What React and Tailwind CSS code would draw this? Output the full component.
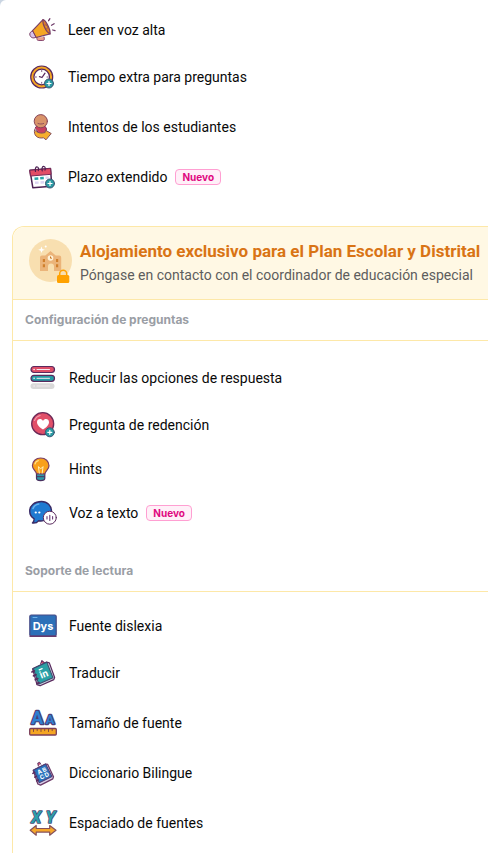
import clsx from 'clsx';

const OUTLINE = '#5a2a5e';

function Icon({ children }) {
  return (
    <svg viewBox="0 0 28 28" className="size-7 shrink-0 overflow-visible" fill="none" strokeLinecap="round" strokeLinejoin="round" aria-hidden="true">
      {children}
    </svg>
  );
}

function PlusBadge({ cx, cy }) {
  return (
    <g>
      <circle cx={cx} cy={cy} r="4.5" fill="#2a9aa3" stroke="#3f5673" strokeWidth="1" />
      <path d={`M${cx - 2} ${cy}h4M${cx} ${cy - 2}v4`} stroke="#fff" strokeWidth="1.2" />
    </g>
  );
}

function MegaphoneIcon() {
  return (
    <Icon>
      <path d="M9 21.500c-.6 2 .2 3 1.800 3h4c1.600 0 2-1.300 1.200-3.500" fill="#e9a08c" stroke="#8a4a72" />
      <path d="M15 3.700 4.300 14.800l3.800 6.700L22 17.800Z" fill="#f5a623" stroke="#7a3f66" strokeWidth="1.200" />
      <path d="M15 3.700c2.300.2 7.800 9.500 7 14.100-3.500-1-7.800-9.500-7-14.100Z" fill="#de7d2b" stroke="#7a3f66" strokeWidth="1.200" />
      <path d="M17 9c2-.6 3.200 2.300 1.800 3.800" fill="#f5a623" stroke="#7a3f66" strokeWidth=".8" />
      <path d="M4.500 15.200c-2.200.4-3.300 2-2.500 4.200.9 2.300 3.300 3.300 5.600 2Z" fill="#d9c2e8" stroke="#7a3f66" />
      <path d="m20.600 4.700 1.300-2M23.500 9.200l2.600-1.400M24.700 14l2.300.7" stroke="#6d3a68" strokeWidth="1.300" />
    </Icon>
  );
}

function ClockIcon() {
  return (
    <Icon>
      <circle cx="13.700" cy="14" r="11" fill="#f5a623" stroke={OUTLINE} strokeWidth="1.200" />
      <circle cx="13.700" cy="14" r="7.800" fill="#fff" stroke={OUTLINE} strokeWidth="1.200" />
      <path d="m11.500 13.700 2.500.8 3-4.300" stroke={OUTLINE} strokeWidth="1.300" />
      <path d="M13.700 7.500v1M7.400 14h1M20 14h-1M13.700 20.300v-1" stroke={OUTLINE} strokeWidth=".8" />
      <PlusBadge cx={21} cy={20.5} />
    </Icon>
  );
}

function AttemptsIcon() {
  return (
    <Icon>
      <path d="M7.300 15c.4-2 2-2.600 5.400-2.600s5.300.8 5.800 3.600l-.8 4.500-5.200 1.500Z" fill="#c93f5e" stroke="#7b3358" />
      <path d="M6.500 17C5.500 22 9 26 15.500 24.800l2.500 2 5.200-6.300-5.700-3.300-.4 2.300C13 20.800 9.500 20 6.500 17Z" fill="#f6ae2d" stroke="#85505b" />
      <circle cx="12.800" cy="8.200" r="6.600" fill="#d9946a" stroke="#87475a" />
      <path d="M10 10.500c1.800.7 3.800.7 5.600 0" stroke="#87475a" strokeWidth=".9" />
    </Icon>
  );
}

function CalendarIcon() {
  return (
    <Icon>
      <path d="M2 7.300 22.500 5.500l1.300 17.700-19 1.500Z" fill="#fff" stroke="#4c2153" strokeWidth="1.500" />
      <path d="M2 7.300 22.500 5.500l.6 5.800L2.800 13Z" fill="#e24d66" stroke="#7b2a56" strokeWidth="1" />
      <path d="M7.500 8.500c-.8-3 .4-4.800 1.800-4.500 1.300.3 1.500 2 1 3.600M14.200 7.800c-.8-3 .4-4.600 1.800-4.300 1.300.3 1.500 2 1 3.600" stroke="#4c2153" strokeWidth="1.200" />
      <path d="m6.500 15.800 3.800-.3M12.200 15.300l3.600-.3" stroke="#28a5a8" strokeWidth="2.400" strokeLinecap="butt" />
      <path d="m17.500 14.800 3.200-.2M7 19.800l3.600-.2M12.500 19.500l3.600-.3" stroke="#ddd5f3" strokeWidth="2.400" strokeLinecap="butt" />
      <PlusBadge cx={22} cy={20.5} />
    </Icon>
  );
}

function OptionsIcon() {
  return (
    <Icon>
      <rect x="2" y="2.500" width="23.500" height="6" rx="3" fill="#de4e68" stroke={OUTLINE} strokeWidth="1.200" />
      <rect x="2" y="11.300" width="23.500" height="6" rx="3" fill="#239ca4" stroke={OUTLINE} strokeWidth="1.200" />
      <rect x="1.500" y="19.200" width="24" height="5.800" rx="2.900" fill="#d9d9d9" />
      <path d="M8 5.500h12.500M8 14.300h12.500M8 22h12.500" stroke="#f4e8ee" strokeWidth="1" />
      <path d="M5 5.500h.2M5 14.300h.2M5 22h.2" stroke="#f4e8ee" strokeWidth="1.600" />
    </Icon>
  );
}

function RedemptionIcon() {
  return (
    <Icon>
      <circle cx="13.700" cy="12.700" r="11" fill="#e14f69" stroke="#6b2957" strokeWidth="1.300" />
      <path d="M5.500 9.500c1.200-2.800 2.800-4.300 5.600-5" stroke="#f29aac" strokeWidth="1.200" />
      <path d="M14 18.500c-3-1.800-6-4.500-6-7.300 0-3.500 4.300-4.200 6-1.300 1.700-2.900 6-2.200 6 1.300 0 2.800-3 5.500-6 7.300Z" fill="#fff" />
      <PlusBadge cx={20.8} cy={21.3} />
    </Icon>
  );
}

function BulbIcon() {
  return (
    <Icon>
      <path d="M7.500 18.500h8.300v4.800c0 1.500-1.400 2.300-4.200 2.300s-4.100-.8-4.100-2.300Z" fill="#2e98a5" stroke="#49305f" strokeWidth="1.200" />
      <path d="M8 21.700h7.300" stroke="#49305f" strokeWidth="1" />
      <path d="M11.700 3c-4.800 0-8.300 3.400-8.300 7.800 0 3.400 3.300 5 4.200 8h8.200c.9-3 4.200-4.600 4.200-8C20 6.400 16.500 3 11.700 3Z" fill="#f9a01b" stroke="#7a3f66" strokeWidth="1.200" />
      <path d="M10.300 18.200 9.500 12M13.200 18.200l.8-6.200M9.500 12l2.200 1.600L14 12" stroke="#fff0b8" strokeWidth="1" />
      <path d="M6 9c.4-1.700 1.600-2.900 3.300-3.300" stroke="#ffe08a" strokeWidth="1.200" />
    </Icon>
  );
}

function VoiceIcon() {
  return (
    <Icon>
      <path d="M12.500 2.500C5.500 2.500.7 6.500.7 12c0 3.500 1.500 6 4.300 7.700.3 1.800-.3 3-1.500 4.300 2.700.3 4.700-.4 6-2.200 7.500 1 13-2.800 13-9.300 0-6-4.200-10-10-10Z" fill="#1f7ad1" stroke="#3a2b66" strokeWidth="1.400" />
      <path d="M4 9.500C5 7 7 5.500 9.700 5" stroke="#6bb3ee" strokeWidth="1.600" />
      <path d="M6.700 13.500h.1M10.300 13.500h.1" stroke="#fff" strokeWidth="2.200" />
      <circle cx="20.800" cy="18.700" r="6.500" fill="#fff" stroke="#5a2a5e" strokeWidth="1" />
      <path d="M18 17.500v2.500M20.800 16.200v5.300M23.600 17.500v2.500" stroke="#6a3b78" strokeWidth="1.100" />
    </Icon>
  );
}

function DyslexiaIcon() {
  return (
    <Icon>
      <rect x="0.800" y="3" width="26.400" height="21" rx="1.500" fill="#2d70b8" stroke="#464a85" strokeWidth="1.200" />
      <path d="M1 24.300h26" stroke="#6b3a6c" strokeWidth="1.400" />
      <path d="M4 5.500h4" stroke="#6fb2ea" strokeWidth="1" />
      <text x="14" y="17.500" textAnchor="middle" fontSize="11" fontWeight="700" fill="#fff" fontFamily="Inter, sans-serif">Dys</text>
    </Icon>
  );
}

function TranslateIcon() {
  return (
    <Icon>
      <g transform="rotate(-5 14 14)">
        <path d="m12.500 4.500 1.500-3 2.200 2.300" fill="#e24d66" stroke={OUTLINE} />
        <path d="M4 9 18.500 3.500l2.700 1 4 15-1 2L10 26.500l-3-1.500Z" fill="#c7d4df" stroke={OUTLINE} strokeWidth="1.200" />
        <path d="M4.700 8.700 18.700 3.500l4.800 16-14.700 5Z" fill="#2aa0a5" stroke="#3d4b70" strokeWidth="1.100" />
        <path d="m3 12 2.600-.9M4.300 16l2.600-.9M5.700 20l2.600-.9M7 24l2.200-.8" stroke={OUTLINE} strokeWidth="1.700" />
        <path d="m10.500 10.500 3-1" stroke="#fff" strokeWidth="1.300" />
        <text x="14.500" y="18.500" textAnchor="middle" transform="rotate(-17 14.500 14)" fontSize="10" fontWeight="700" fill="#fff" fontFamily="Roboto, sans-serif">in</text>
      </g>
    </Icon>
  );
}

function FontSizeIcon() {
  return (
    <Icon>
      <g fill="#2e7fd0" stroke="#4b3f78" strokeWidth="2.400" strokeLinejoin="round" paintOrder="stroke" fontFamily="Roboto, sans-serif" fontWeight="700" textAnchor="middle">
        <text x="8.200" y="15.300" fontSize="18">A</text>
        <text x="21.200" y="15.300" fontSize="13">A</text>
      </g>
      <rect x="0.700" y="19.500" width="26.600" height="6.500" rx="1" fill="#f5a623" stroke="#7b3e5a" strokeWidth="1.300" />
      <path d="M4.500 20v2.500M8.200 20v1.700M12 20v2.500M15.700 20v1.700M19.500 20v2.500M23.200 20v1.700" stroke="#8a4a3c" strokeWidth="1" />
    </Icon>
  );
}

function DictionaryIcon() {
  return (
    <Icon>
      <g transform="rotate(-8 14 15)">
        <path d="m10.500 6.500-.2-3 2-.6.8 2" fill="#d2607b" stroke={OUTLINE} strokeWidth=".9" />
        <path d="m4.800 10 13.200-4.500 2 .7 4 13-1 2-13 4.500-2.500-1.500Z" fill="#d5cfe8" stroke="#6d3a68" strokeWidth="1.300" />
        <path d="M5.300 9.800 18 5.500l4.500 13.200-13.500 4.500Z" fill="#2a74bd" stroke="#4b3f78" strokeWidth="1" />
        <path d="m4 13 2-.7M5.300 17l2-.7M6.700 21l2-.7" stroke={OUTLINE} strokeWidth="1.400" />
        <g transform="rotate(-18 14 14.500)" fill="#fff" fontFamily="Inter, sans-serif" fontSize="6" fontWeight="700" textAnchor="middle">
          <text x="11.800" y="13.800">A</text>
          <text x="17" y="13.800">B</text>
          <text x="11.800" y="19.300">C</text>
          <text x="17" y="19.300">D</text>
        </g>
      </g>
    </Icon>
  );
}

function SpacingIcon() {
  return (
    <Icon>
      <g fill="#2ba0aa" stroke="#4d4b78" strokeWidth="1.600" paintOrder="stroke" fontFamily="Roboto, sans-serif" fontWeight="700" fontStyle="italic" textAnchor="middle">
        <text x="7.300" y="13.500" fontSize="16">X</text>
        <text x="21.500" y="13.500" fontSize="16">Y</text>
      </g>
      <path d="m1.200 21.300 6-4.800v3h13.500v-3l6.300 4.800-6.300 4.900v-3.100H7.200v3.100Z" fill="#f6a72b" stroke="#85505b" strokeWidth="1.200" />
    </Icon>
  );
}

function SchoolBadge() {
  return (
    <svg viewBox="0 0 43 45" className="h-[45px] w-[43px] shrink-0" aria-hidden="true">
      <circle cx="21.500" cy="21.500" r="21.500" fill="#f8dfb0" />
      <path d="M11 18.500q0-2 2-2h3.300L21.500 12l5.200 4.500h3.500q2 0 2 2V32H25v-4.500a3 3 0 0 0-6 0V32h-8Z" fill="#ebb47a" />
      <circle cx="21.500" cy="19" r="2.800" fill="#fff3d9" />
      <path d="M21.500 17.500v1.700h1.400" fill="none" stroke="#c97320" strokeWidth="1" />
      <path d="M13.800 20h2.200v3h-2.200ZM13.800 25.300h2.200v3h-2.200ZM27 20h2.200v3H27ZM27 25.300h2.200v3H27Z" fill="#d07f2c" />
      <path d="m12.500 7.500.9 2.400 2.400.9-2.400.9-.9 2.400-.9-2.400-2.400-.9 2.400-.9Z" fill="#fff" />
      <circle cx="16.700" cy="7.500" r="1" fill="#fff" />
      <path d="M30.700 38v-3.200a3.500 3.500 0 0 1 7 0V38" fill="none" stroke="#ffa200" strokeWidth="1.500" />
      <rect x="28" y="36" width="12.300" height="8" rx="1.500" fill="#ffa200" />
    </svg>
  );
}

const generalItems = [
  { label: 'Leer en voz alta', icon: MegaphoneIcon, compact: true },
  { label: 'Tiempo extra para preguntas', icon: ClockIcon },
  { label: 'Intentos de los estudiantes', icon: AttemptsIcon },
  { label: 'Plazo extendido', icon: CalendarIcon, isNew: true },
];

const planSections = [
  {
    title: 'Configuración de preguntas',
    items: [
      { label: 'Reducir las opciones de respuesta', icon: OptionsIcon },
      { label: 'Pregunta de redención', icon: RedemptionIcon, compact: true },
      { label: 'Hints', icon: BulbIcon, compact: true },
      { label: 'Voz a texto', icon: VoiceIcon, isNew: true, compact: true },
    ],
  },
  {
    title: 'Soporte de lectura',
    items: [
      { label: 'Fuente dislexia', icon: DyslexiaIcon, compact: true },
      { label: 'Traducir', icon: TranslateIcon },
      { label: 'Tamaño de fuente', icon: FontSizeIcon },
      { label: 'Diccionario Bilingue', icon: DictionaryIcon },
      { label: 'Espaciado de fuentes', icon: SpacingIcon },
    ],
  },
];

function Item({ label, icon: ItemIcon, isNew, compact }) {
  return (
    <li className={clsx('flex items-center gap-3', compact ? 'h-11' : 'h-[50px]')}>
      <ItemIcon />
      <span className="flex items-center gap-2 font-['Roboto',sans-serif] text-sm text-[#090909]">
        {label}
        {isNew && (
          <span className="rounded border border-[#ff9fd2] bg-[#fff0f8] px-1.5 font-['Inter',sans-serif] text-[10px] leading-[14px] font-bold text-[#e0087f]">
            Nuevo
          </span>
        )}
      </span>
    </li>
  );
}

export default function App() {
  return (
    <div className="bg-slate-300 font-['Inter','Noto_Sans',sans-serif]">
      <main className="flex min-h-screen flex-col overflow-hidden rounded-tl-md bg-white pt-2">
        <ul className="pl-7">
          {generalItems.map(item => <Item key={item.label} {...item} />)}
        </ul>

        <section className="mt-6 ml-3 flex-1 rounded-tl-xl border-t border-l border-[#fde8a8]">
          <header className="flex h-[73px] items-start gap-2 rounded-tl-xl border-b border-[#fde8a8] bg-[#fff8e4] pt-3 pl-4">
            <SchoolBadge />
            <div className="font-['Roboto',sans-serif] whitespace-nowrap">
              <h2 className="text-[17px] leading-6 font-bold text-[#d97414]">
                Alojamiento exclusivo para el Plan Escolar y Distrital
              </h2>
              <p className="text-sm leading-6 text-[#5d5d5d]">
                Póngase en contacto con el coordinador de educación especial
              </p>
            </div>
          </header>

          {planSections.map(section => (
            <section key={section.title} className="pb-4 last:pb-1">
              <h3 className="flex h-[41px] items-center border-b border-[#fde8a8] pl-3 text-xs font-bold text-[#9a9ea5]">
                {section.title}
              </h3>
              <ul className="pt-3 pl-4">
                {section.items.map(item => <Item key={item.label} {...item} />)}
              </ul>
            </section>
          ))}
        </section>
      </main>
    </div>
  );
}
